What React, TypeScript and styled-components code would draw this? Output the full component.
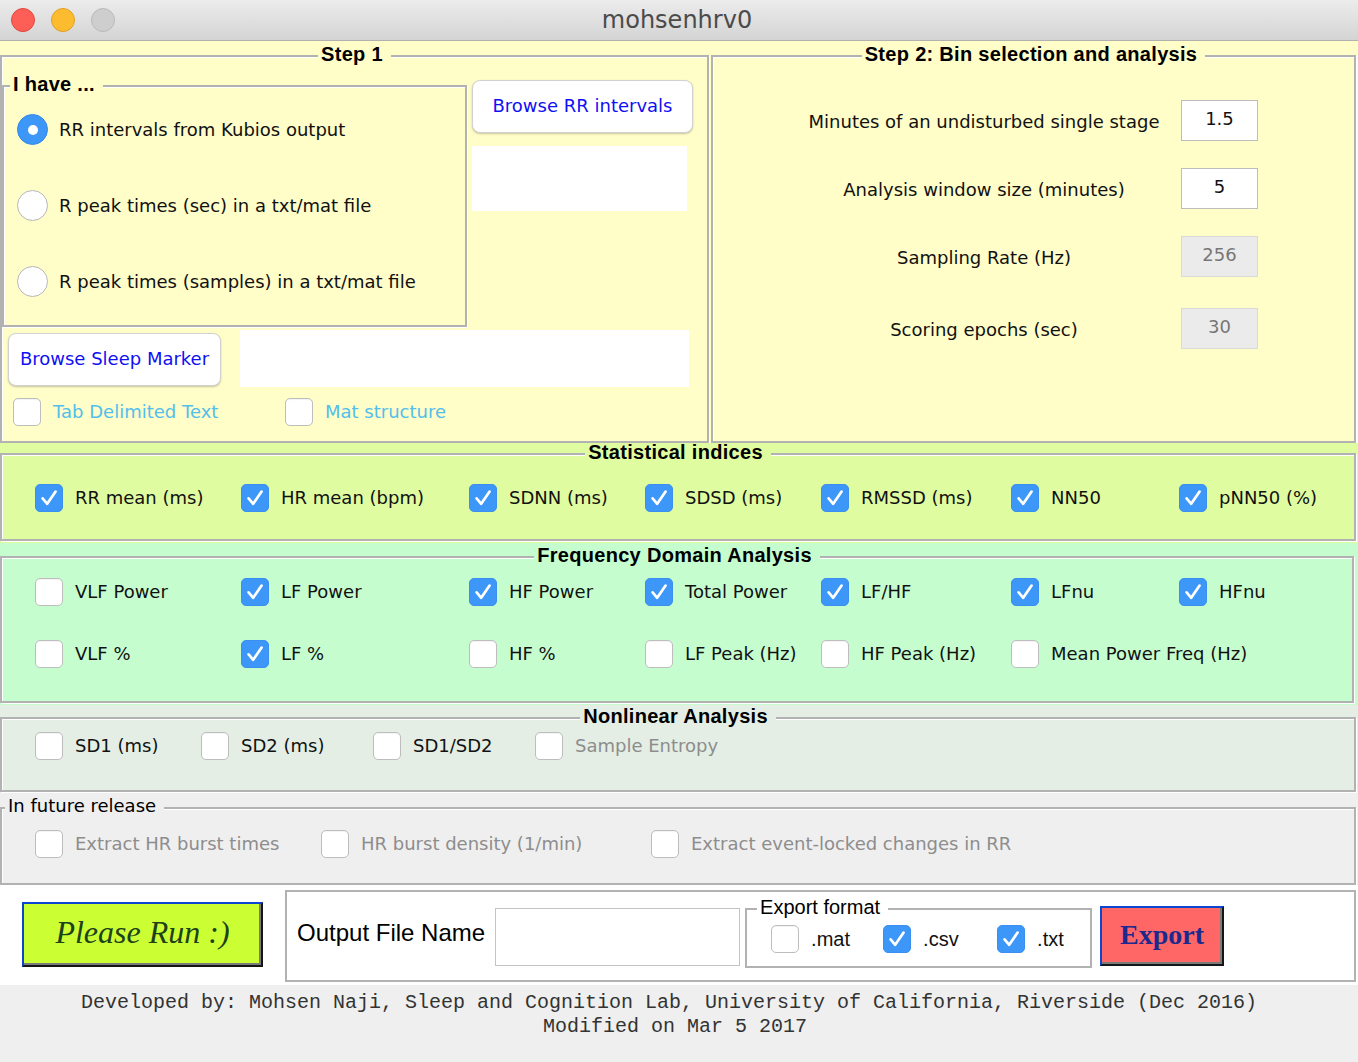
import React from "react";
import styled, { createGlobalStyle } from "styled-components";

const UI = `"DejaVu Sans", "Liberation Sans", sans-serif`;
const HEL = `"Liberation Sans", Arial, sans-serif`;

const GlobalStyle = createGlobalStyle`
  html, body { margin: 0; padding: 0; background: #efefef; }
  * { box-sizing: border-box; }
`;

const Window = styled.div`
  width: 1358px;
  height: 1062px;
  display: flex;
  flex-direction: column;
  overflow: hidden;
  background: #efefef;
  font-family: ${UI};
  color: #111;
`;

const TitleBar = styled.header`
  flex: none;
  height: 41px;
  display: grid;
  grid-template-columns: 1fr auto 1fr;
  align-items: center;
  background: linear-gradient(#ececec, #d4d4d4);
  border-bottom: 1px solid #b1b1b1;
`;

const Lights = styled.div`
  display: flex;
  gap: 16px;
  padding-left: 11px;
`;

const Light = styled.span<{ $fill: string; $edge: string }>`
  width: 24px;
  height: 24px;
  border-radius: 50%;
  background: ${(p) => p.$fill};
  border: 1px solid ${(p) => p.$edge};
`;

const WindowTitle = styled.div`
  font: 24px/28px ${UI};
  color: #4b4b4b;
  margin-right: 4px;
`;

const Band = styled.section<{ $bg: string }>`
  flex: none;
  background: ${(p) => p.$bg};
`;

const TopBand = styled(Band)`
  height: 402px;
  display: grid;
  grid-template-columns: 709px 1fr;
  column-gap: 2px;
  padding: 4px 2px 2px 0;
`;

const Frame = styled.fieldset`
  margin: 0;
  min-width: 0;
  padding: 0;
  border: 2px solid #b2b2b2;
  box-shadow: inset 1px 1px 0 #fff, 1px 1px 0 #fff;
`;

const Legend = styled.legend<{ $bg: string; $indent?: number; $plain?: boolean }>`
  padding: 0 8px 4px 3px;
  margin: ${(p) => (p.$indent !== undefined ? `0 0 0 ${p.$indent}px` : "0 auto")};
  background: ${(p) => p.$bg};
  font: ${(p) => (p.$plain ? `18px/18px ${UI}` : `bold 20px/18px ${HEL}`)};
  letter-spacing: ${(p) => (p.$plain ? "0" : "0.3px")};
  color: #000;
  white-space: nowrap;
`;

/* ---------- Step 1 ---------- */
const Step1Frame = styled(Frame)`
  padding: 8px 0 15px 0;
`;

const Step1Top = styled.div`
  display: grid;
  grid-template-columns: 465px 1fr;
`;

const IHaveFrame = styled(Frame)`
  padding: 17px 0 28px 0;
`;

const RadioList = styled.div`
  display: flex;
  flex-direction: column;
  gap: 45px;
  padding-left: 13px;
`;

const RadioRow = styled.label`
  display: flex;
  align-items: center;
  gap: 11px;
  font: 18px/31px ${UI};
`;

const Radio = styled.span<{ $on?: boolean }>`
  width: 31px;
  height: 31px;
  border-radius: 50%;
  flex: none;
  display: flex;
  align-items: center;
  justify-content: center;
  background: ${(p) => (p.$on ? "#3c97f9" : "#fff")};
  border: 1px solid ${(p) => (p.$on ? "#3289ec" : "#b7b7b7")};
  &::after {
    content: "";
    width: 10px;
    height: 10px;
    border-radius: 50%;
    background: #fff;
    display: ${(p) => (p.$on ? "block" : "none")};
  }
`;

const BrowseCol = styled.div`
  display: flex;
  flex-direction: column;
  align-items: flex-start;
  padding: 5px 0 0 5px;
  gap: 13px;
`;

const BrowseButton = styled.button<{ $w: number }>`
  width: ${(p) => p.$w}px;
  height: 53px;
  flex: none;
  background: #fff;
  border: 1px solid #d2d2d2;
  border-radius: 8px;
  box-shadow: 0 1px 2px rgba(0, 0, 0, 0.22);
  color: #1010f4;
  font: 18px ${UI};
  padding: 0 0 3px 0;
`;

const PathBox = styled.div<{ $w: number; $h: number }>`
  width: ${(p) => p.$w}px;
  height: ${(p) => p.$h}px;
  background: #fff;
  flex: none;
`;

const SleepRow = styled.div`
  display: flex;
  align-items: flex-start;
  margin-top: 3px;
  padding-left: 6px;
  gap: 19px;
  & > button {
    margin-top: 3px;
  }
`;

const FormatRow = styled.div`
  display: grid;
  grid-template-columns: 272px auto;
  margin-top: 11px;
  padding-left: 11px;
`;

/* ---------- Step 2 ---------- */
const Step2Frame = styled(Frame)`
  padding: 33px 0 0 0;
`;

const ParamGrid = styled.div`
  display: grid;
  grid-template-columns: 376px 77px;
  column-gap: 9px;
  row-gap: 27px;
  align-items: center;
  margin-left: 83px;
  & > :nth-last-child(-n + 2) {
    margin-top: 4px;
  }
`;

const ParamLabel = styled.div`
  text-align: center;
  white-space: nowrap;
  font: 18px/24px ${UI};
  padding-top: 3px;
`;

const ParamInput = styled.div<{ $off?: boolean }>`
  height: 41px;
  display: flex;
  align-items: center;
  justify-content: center;
  padding-bottom: 5px;
  background: ${(p) => (p.$off ? "#ebebeb" : "#fff")};
  border: 1px solid ${(p) => (p.$off ? "#d9d9d9" : "#bdbdbd")};
  color: ${(p) => (p.$off ? "#777" : "#111")};
  font: 18px ${UI};
`;

/* ---------- Check boxes ---------- */
const CheckItem = styled.label<{ $tone?: "normal" | "link" | "muted" }>`
  display: flex;
  align-items: center;
  gap: 12px;
  font: 18px/28px ${UI};
  white-space: nowrap;
  color: ${(p) => (p.$tone === "link" ? "#52bfec" : p.$tone === "muted" ? "#8d8d8d" : "#111")};
`;

const HelItem = styled(CheckItem)`
  font: 20px/28px ${HEL};
`;

const Box = styled.span<{ $on?: boolean }>`
  width: 28px;
  height: 28px;
  flex: none;
  border-radius: 5px;
  display: flex;
  background: ${(p) => (p.$on ? "#3c97f9" : "#fff")};
  border: 1px solid ${(p) => (p.$on ? "#3a8ff0" : "#bdbdbd")};
  box-shadow: ${(p) => (p.$on ? "none" : "inset 0 1px 1px rgba(0,0,0,0.05)")};
`;

const Check: React.FC<{ on?: boolean; label: string; tone?: "normal" | "link" | "muted"; hel?: boolean }> = ({
  on,
  label,
  tone,
  hel,
}) => {
  const Item = hel ? HelItem : CheckItem;
  return (
    <Item $tone={tone}>
      <Box $on={on}>
        {on && (
          <svg width="26" height="26" viewBox="0 0 26 26">
            <path
              d="M6.6 13.4 L11.2 18.8 L19.6 6.6"
              stroke="#fff"
              strokeWidth="2.7"
              fill="none"
              strokeLinecap="round"
              strokeLinejoin="round"
            />
          </svg>
        )}
      </Box>
      {label}
    </Item>
  );
};

const CheckGrid = styled.div<{ $cols: string; $inset?: number }>`
  display: grid;
  grid-template-columns: ${(p) => p.$cols};
  row-gap: 34px;
  padding-left: ${(p) => p.$inset ?? 33}px;
`;

/* ---------- Analysis bands ---------- */
const StatBand = styled(Band)`
  padding: 0 2px 2px 0;
`;
const StatFrame = styled(Frame)`
  padding: 19px 0 27px 0;
`;

const FreqBand = styled(Band)`
  padding: 3px 4px 2px 0;
`;
const FreqFrame = styled(Frame)`
  padding: 10px 0 33px 0;
`;

const NonlinBand = styled(Band)`
  padding: 2px 2px 1px 0;
`;
const NonlinFrame = styled(Frame)`
  padding: 3px 0 30px 0;
`;

const FutureBand = styled(Band)`
  padding: 4px 2px 0 0;
`;
const FutureFrame = styled(Frame)`
  padding: 11px 0 25px 0;
`;

/* ---------- Bottom ---------- */
const BottomBand = styled(Band)`
  height: 100px;
  display: flex;
  align-items: flex-start;
  gap: 22px;
  padding: 5px 2px 3px 22px;
`;

const RunButton = styled.button`
  flex: none;
  width: 241px;
  height: 65px;
  margin-top: 12px;
  padding: 0 0 4px 0;
  background: #ccff33;
  border-style: solid;
  border-width: 2px;
  border-color: #0b45d2 #151515 #151515 #0b45d2;
  box-shadow: inset -2px -2px 0 #7a7a7a;
  font: italic 32px "Liberation Serif", "DejaVu Serif", serif;
  color: #1c421c;
`;

const OutputFrame = styled(Frame)`
  flex: 1;
  height: 92px;
  display: flex;
  align-items: flex-start;
  padding: 0 0 0 10px;
`;

const OutputLabel = styled.div`
  margin-top: 27px;
  font: 24px/28px ${HEL};
  color: #000;
  white-space: nowrap;
`;

const FileInput = styled.div`
  flex: none;
  width: 245px;
  height: 58px;
  margin: 16px 0 0 10px;
  background: #fff;
  border: 1px solid #c4c4c4;
`;

const ExportFrame = styled(Frame)`
  flex: none;
  width: 347px;
  margin: 6px 0 0 5px;
  padding: 5px 0 13px 0;
`;

const ExportLegend = styled.legend`
  margin-left: 10px;
  padding: 0 8px 4px 3px;
  font: 20px/18px ${HEL};
  color: #000;
  background: #fff;
`;

const ExportButton = styled.button`
  flex: none;
  width: 124px;
  height: 60px;
  margin: 14px 0 0 8px;
  padding: 0 0 2px 0;
  background: #ff6666;
  border-style: solid;
  border-width: 2px;
  border-color: #0b45d2 #151515 #151515 #0b45d2;
  box-shadow: inset -2px -2px 0 #7a7a7a;
  font: bold 28px "Liberation Serif", serif;
  color: #1b2a8e;
`;

const Footer = styled.footer`
  flex: 1;
  padding: 6px 8px 0 0;
  text-align: center;
  white-space: pre;
  font: 20px/24px "Liberation Mono", "DejaVu Sans Mono", monospace;
  color: #333;
`;

const YELLOW = "#fffdc8";
const STAT = "#e0fca0";
const FREQ = "#c6fdcf";
const NONLIN = "#e4eee4";
const FUTURE = "#efefef";

const stats = ["RR mean (ms)", "HR mean (bpm)", "SDNN (ms)", "SDSD (ms)", "RMSSD (ms)", "NN50", "pNN50 (%)"];
const freq: [string, boolean][] = [
  ["VLF Power", false],
  ["LF Power", true],
  ["HF Power", true],
  ["Total Power", true],
  ["LF/HF", true],
  ["LFnu", true],
  ["HFnu", true],
  ["VLF %", false],
  ["LF %", true],
  ["HF %", false],
  ["LF Peak (Hz)", false],
  ["HF Peak (Hz)", false],
  ["Mean Power Freq (Hz)", false],
];
const COLS7 = "206px 228px 176px 176px 190px 168px 1fr";

export default function App() {
  return (
    <>
      <GlobalStyle />
      <Window>
        <TitleBar>
          <Lights>
            <Light $fill="#fd5f57" $edge="#e2463f" />
            <Light $fill="#fdbc2f" $edge="#dea123" />
            <Light $fill="#cecece" $edge="#b9b9b9" />
          </Lights>
          <WindowTitle>mohsenhrv0</WindowTitle>
          <div />
        </TitleBar>

        <TopBand $bg={YELLOW}>
          <Step1Frame>
            <Legend $bg={YELLOW}>Step 1</Legend>
            <Step1Top>
              <IHaveFrame>
                <Legend $bg={YELLOW} $indent={6}>
                  I have ...
                </Legend>
                <RadioList>
                  <RadioRow>
                    <Radio $on />
                    RR intervals from Kubios output
                  </RadioRow>
                  <RadioRow>
                    <Radio />
                    R peak times (sec) in a txt/mat file
                  </RadioRow>
                  <RadioRow>
                    <Radio />
                    R peak times (samples) in a txt/mat file
                  </RadioRow>
                </RadioList>
              </IHaveFrame>
              <BrowseCol>
                <BrowseButton $w={221}>Browse RR intervals</BrowseButton>
                <PathBox $w={215} $h={65} />
              </BrowseCol>
            </Step1Top>
            <SleepRow>
              <BrowseButton $w={213}>Browse Sleep Marker</BrowseButton>
              <PathBox $w={449} $h={57} />
            </SleepRow>
            <FormatRow>
              <Check label="Tab Delimited Text" tone="link" />
              <Check label="Mat structure" tone="link" />
            </FormatRow>
          </Step1Frame>

          <Step2Frame>
            <Legend $bg={YELLOW}>Step 2: Bin selection and analysis</Legend>
            <ParamGrid>
              <ParamLabel>Minutes of an undisturbed single stage</ParamLabel>
              <ParamInput>1.5</ParamInput>
              <ParamLabel>Analysis window size (minutes)</ParamLabel>
              <ParamInput>5</ParamInput>
              <ParamLabel>Sampling Rate (Hz)</ParamLabel>
              <ParamInput $off>256</ParamInput>
              <ParamLabel>Scoring epochs (sec)</ParamLabel>
              <ParamInput $off>30</ParamInput>
            </ParamGrid>
          </Step2Frame>
        </TopBand>

        <StatBand $bg={STAT}>
          <StatFrame>
            <Legend $bg={STAT}>Statistical indices</Legend>
            <CheckGrid $cols={COLS7}>
              {stats.map((s) => (
                <Check key={s} label={s} on />
              ))}
            </CheckGrid>
          </StatFrame>
        </StatBand>

        <FreqBand $bg={FREQ}>
          <FreqFrame>
            <Legend $bg={FREQ}>Frequency Domain Analysis</Legend>
            <CheckGrid $cols={COLS7}>
              {freq.map(([s, on]) => (
                <Check key={s} label={s} on={on} />
              ))}
            </CheckGrid>
          </FreqFrame>
        </FreqBand>

        <NonlinBand $bg={NONLIN}>
          <NonlinFrame>
            <Legend $bg={NONLIN}>Nonlinear Analysis</Legend>
            <CheckGrid $cols="166px 172px 162px 1fr">
              <Check label="SD1 (ms)" />
              <Check label="SD2 (ms)" />
              <Check label="SD1/SD2" />
              <Check label="Sample Entropy" tone="muted" />
            </CheckGrid>
          </NonlinFrame>
        </NonlinBand>

        <FutureBand $bg={FUTURE}>
          <FutureFrame>
            <Legend $bg={FUTURE} $indent={3} $plain>
              In future release
            </Legend>
            <CheckGrid $cols="286px 330px 1fr">
              <Check label="Extract HR burst times" tone="muted" />
              <Check label="HR burst density (1/min)" tone="muted" />
              <Check label="Extract event-locked changes in RR" tone="muted" />
            </CheckGrid>
          </FutureFrame>
        </FutureBand>

        <BottomBand $bg="#fff">
          <RunButton>Please Run :)</RunButton>
          <OutputFrame>
            <OutputLabel>Output File Name</OutputLabel>
            <FileInput />
            <ExportFrame>
              <ExportLegend>Export format</ExportLegend>
              <CheckGrid $cols="112px 114px auto" $inset={24}>
                <Check label=".mat" hel />
                <Check label=".csv" hel on />
                <Check label=".txt" hel on />
              </CheckGrid>
            </ExportFrame>
            <ExportButton>Export</ExportButton>
          </OutputFrame>
        </BottomBand>

        <Footer>
          {"Developed by: Mohsen Naji, Sleep and Cognition Lab, University of California, Riverside (Dec 2016) \nModified on Mar 5 2017"}
        </Footer>
      </Window>
    </>
  );
}
